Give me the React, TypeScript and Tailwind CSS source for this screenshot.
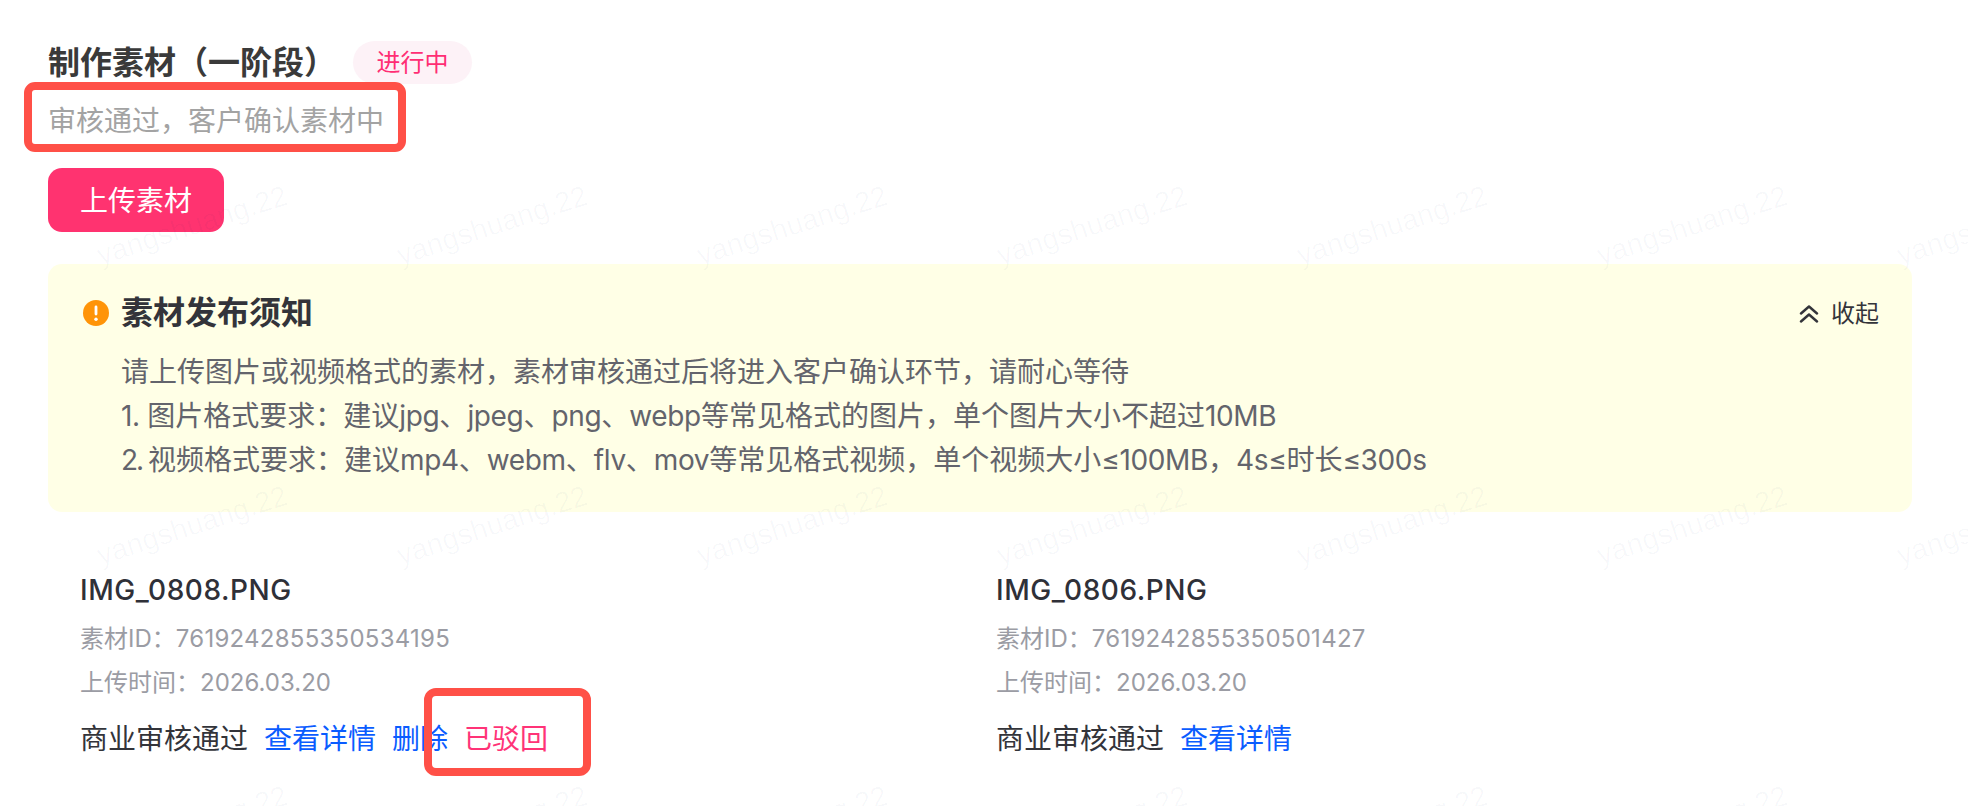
const FONT = "font-['Inter','Noto_Sans_CJK_SC',sans-serif]";

const files = [
  { name: "IMG_0808.PNG", id: "7619242855350534195", canDelete: true },
  { name: "IMG_0806.PNG", id: "7619242855350501427", canDelete: false },
];

function Watermarks() {
  return (
    <div className="absolute inset-0 overflow-hidden pointer-events-none grid grid-cols-[repeat(7,300px)] auto-rows-[300px] pl-[42px] pt-[76px]">
      {Array.from({ length: 21 }).map((_, i) => (
        <div key={i} className="flex items-center justify-center">
          <span className="-rotate-[18deg] text-[29px] text-[#1a2a6c]/[0.03] whitespace-nowrap font-['Liberation_Sans',sans-serif]">
            yangshuang.22
          </span>
        </div>
      ))}
    </div>
  );
}

function WarnIcon() {
  return (
    <svg width="26" height="26" viewBox="0 0 26 26" className="shrink-0">
      <circle cx="13" cy="13" r="13" fill="#ff9408" />
      <rect x="11.6" y="5.5" width="2.8" height="10" rx="1.4" fill="#fff" />
      <circle cx="13" cy="19.2" r="1.7" fill="#fff" />
    </svg>
  );
}

function ChevronsUp() {
  return (
    <svg width="20" height="18" viewBox="0 0 20 18" fill="none" stroke="#33343a" strokeWidth="2.4" strokeLinecap="round" strokeLinejoin="round">
      <path d="M2 8.5 10 1.5 18 8.5" />
      <path d="M2 16.5 10 9.5 18 16.5" />
    </svg>
  );
}

function Latin({ children }: { children: React.ReactNode }) {
  return <span className="tracking-[-0.35px]">{children}</span>;
}

export default function App() {
  return (
    <div className={`relative h-[806px] overflow-hidden bg-white pl-[48px] pr-[56px] pt-[41px] ${FONT}`}>
      <div className="flex items-center h-[43px]">
        <h1 className="text-[32px] font-semibold text-[#3a3a3a] leading-none">制作素材（一阶段）</h1>
        <span className="ml-[17px] w-[119px] h-[43px] rounded-full bg-[#fdf2f7] text-[#ff2e74] text-[24px] flex items-center justify-center">
          进行中
        </span>
      </div>
      <p className="mt-[17px] text-[28px] leading-[40px] text-[#a3a3a3]">审核通过，客户确认素材中</p>

      <button className="mt-[27px] block w-[176px] h-[64px] rounded-[14px] bg-[#ff3370] text-white text-[28px] pt-[2px]">上传素材</button>

      <section className="mt-[32px] h-[248px] rounded-[14px] bg-[#ffffe6] pl-[35px] pr-[33px] pt-[31px]">
        <div className="flex items-center h-[36px]">
          <WarnIcon />
          <h2 className="ml-[12px] text-[32px] font-semibold text-[#33343a] leading-none">素材发布须知</h2>
          <div className="ml-auto flex items-center gap-[12px] text-[24px] text-[#33343a] mt-[2px]">
            <ChevronsUp />
            <span>收起</span>
          </div>
        </div>
        <div className="mt-[19px] pl-[38px] text-[28px] leading-[44px] text-[#63646c]">
          <p>请上传图片或视频格式的素材，素材审核通过后将进入客户确认环节，请耐心等待</p>
          <p>
            <Latin>1. </Latin>图片格式要求：建议<Latin>jpg</Latin>、<Latin>jpeg</Latin>、<Latin>png</Latin>、<Latin>webp</Latin>等常见格式的图片，单个图片大小不超过<Latin>10MB</Latin>
          </p>
          <p>
            <span className="tracking-[-2px]">2. </span>视频格式要求：建议<Latin>mp4</Latin>、<Latin>webm</Latin>、<Latin>flv</Latin>、<Latin>mov</Latin>等常见格式视频，单个视频大小<Latin>≤100MB</Latin>，<Latin>4s≤</Latin>时长<Latin>≤300s</Latin>
          </p>
        </div>
      </section>

      <div className="mt-[58px] grid grid-cols-[916px_1fr] pl-[32px]">
        {files.map((f) => (
          <div key={f.id}>
            <p className="text-[28px] tracking-[0.55px] leading-[40px] font-medium text-[#2f3038]">{f.name}</p>
            <p className="mt-[9px] text-[24px] leading-[40px] text-[#9b9ca4]">
              素材ID：<span className="tracking-[0.26px]">{f.id}</span>
            </p>
            <p className="mt-[4px] text-[24px] leading-[40px] text-[#9b9ca4]">上传时间：2026.03.20</p>
            <div className="mt-[16px] flex items-center text-[28px] leading-[40px]">
              <span className="text-[#33343a]">商业审核通过</span>
              <a className="ml-[16px] text-[#0a5cff]">查看详情</a>
              {f.canDelete && <a className="ml-[16px] text-[#0a5cff]">删除</a>}
              {f.canDelete && <span className="ml-[16px] text-[#ff3377]">已驳回</span>}
            </div>
          </div>
        ))}
      </div>

      <Watermarks />

      <div className="absolute left-[24px] top-[82px] w-[382px] h-[70px] rounded-[11px] border-[8px] border-[#ff5047]" />
      <div className="absolute left-[424px] top-[688px] w-[167px] h-[88px] rounded-[12px] border-[8px] border-[#ff5047]" />
    </div>
  );
}
